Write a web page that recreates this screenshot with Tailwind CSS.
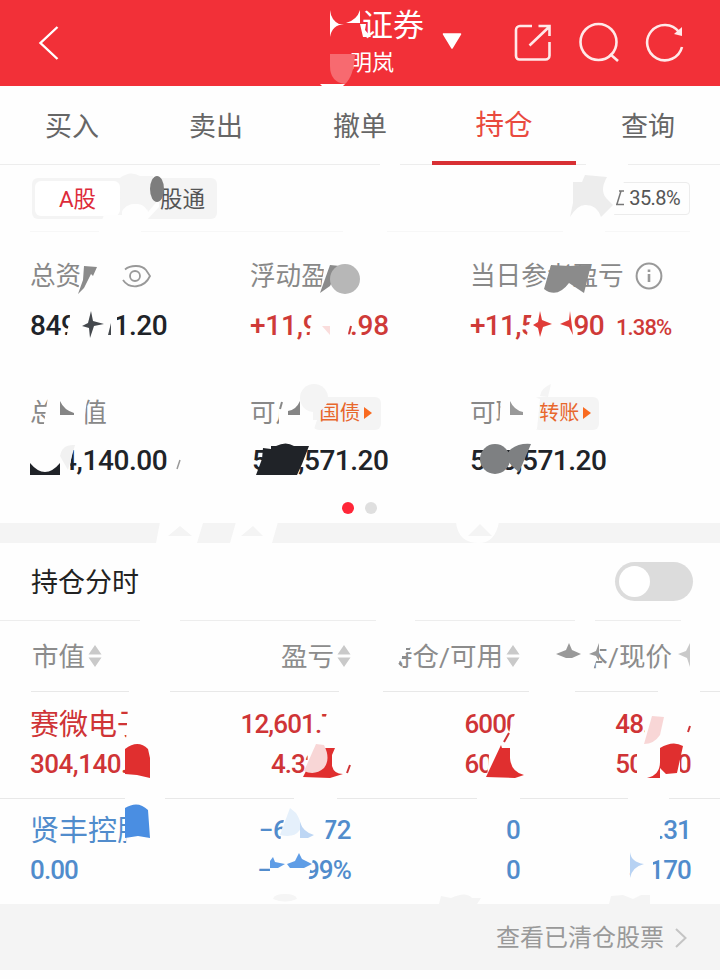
<!DOCTYPE html>
<html lang="zh-CN">
<head>
  <meta charset="UTF-8" />
  <title>持仓</title>
  <script src="https://cdn.jsdelivr.net/npm/@tailwindcss/browser@4"></script>
</head>
<body class="bg-white">
  <div class="relative w-[720px] h-[979px] overflow-hidden bg-[#fefefe] font-['Roboto','Noto_Sans_CJK_SC',sans-serif]">

    <!-- Header -->
    <header class="h-[86px] bg-[#f23038] text-white flex items-center pl-[38px] pr-[35px]">
      <svg class="w-[22px] h-[36px]" viewBox="0 0 22 36" fill="none" stroke="#fff" stroke-width="2.4"><path d="M19.5 2 2.5 18l17 16" /></svg>
      <div class="ml-[290px] w-[76px] h-[86px] pt-[7px]">
        <div class="text-[31px] leading-[38px] pl-[12px] whitespace-nowrap">证券</div>
        <div class="text-[22px] leading-[36px] whitespace-nowrap">明岚</div>
      </div>
      <svg class="ml-[16px] mb-[3px] w-[20px] h-[17px]" viewBox="0 0 20 17"><path d="M1.500 1h17L10 15z" fill="#fff" stroke="#fff" stroke-width="1.500" stroke-linejoin="round" /></svg>
      <div class="ml-auto flex items-center gap-[25px]">
        <svg class="w-[40px] h-[40px]" viewBox="0 0 40 40" fill="none" stroke="#ffe9e9" stroke-width="2.600">
          <path d="M19 3H7a4 4 0 0 0-4 4v26a3.500 3.500 0 0 0 3.500 3.500h26a4 4 0 0 0 4-4V19M16.500 22.500 36 4M25.500 3h11v10" />
        </svg>
        <svg class="w-[42px] h-[42px]" viewBox="0 0 42 42" fill="none" stroke="#ffe9e9" stroke-width="2.600">
          <circle cx="20.500" cy="20" r="18" /><path d="m32 32 8 7" />
        </svg>
        <svg class="w-[40px] h-[40px]" viewBox="0 0 40 40" fill="none" stroke="#ffe9e9" stroke-width="2.600">
          <path d="M37 24A17.700 17.700 0 1 1 34 9" /><path d="M37 4v9l-8-2z" fill="#ffe9e9" stroke="none" />
        </svg>
      </div>
    </header>

    <!-- Tabs -->
    <nav class="h-[79px] grid grid-cols-5 border-b border-[#ededed] text-[27px] leading-[83px] text-center text-[#666]">
      <a>买入</a>
      <a>卖出</a>
      <a>撤单</a>
      <a class="h-[79px] text-[28.500px] leading-[80px] text-[#e94a3e] border-b-4 border-[#d83034]">持仓</a>
      <a>查询</a>
    </nav>

    <!-- Market switch -->
    <div class="h-[67px] mx-[30px] pl-[2px] flex items-center justify-between border-b border-[#f7f7f7]">
      <div class="w-[185px] h-[41px] p-[3px] rounded-md bg-[#f4f4f4] flex text-[22.500px] leading-[36px]">
        <div class="w-[85px] h-[35px] rounded-md bg-white text-center text-[#dd2b3a]">A股</div>
        <div class="flex-1 text-right pr-[9px] text-[#555]">股通</div>
      </div>
      <div class="w-[118px] h-[33px] pr-[9px] border border-[#ececec] rounded-sm text-right text-[20px] leading-[30px] tracking-[-0.6px] text-[#555]">35.8%</div>
    </div>

    <!-- Account summary -->
    <section class="h-[291px] pt-[26px] pl-[30px]">
      <div class="grid grid-cols-[220px_220px_250px]">
        <div>
          <div class="h-[36px] flex items-center text-[25.600px] text-[#888]">总资产
            <svg class="ml-[15px] mt-[2px] w-[30px] h-[24px]" viewBox="0 0 30 24" fill="none" stroke="#999" stroke-width="1.800"><path d="M3 4.500C9-.5 20 0 24 5l4 6c-6 13-21 13-27 4" /><circle cx="13" cy="11" r="5" /></svg>
          </div>
          <div class="mt-[12px] text-[28px] leading-[40px] tracking-[-0.400px] font-medium text-[#202328]">849,711.20</div>
        </div>
        <div>
          <div class="h-[36px] text-[25.600px] leading-[37px] text-[#888]">浮动盈亏</div>
          <div class="mt-[12px] text-[28px] leading-[40px] tracking-[-0.200px] font-medium text-[#cf3a38]">+11,922.98</div>
        </div>
        <div>
          <div class="h-[36px] flex items-center text-[25.600px] text-[#888]">当日参考盈亏
            <svg class="ml-[11px] w-[28px] h-[28px]" viewBox="0 0 28 28" fill="none" stroke="#999" stroke-width="2"><circle cx="14" cy="14" r="12.400" /><path d="M14 12v8M14 7.500v2.500" stroke-width="2.600" /></svg>
          </div>
          <div class="mt-[12px] flex items-baseline text-[28px] leading-[40px] tracking-[-0.700px] font-medium text-[#cf3a38]">+11,571.90<span class="ml-[12px] text-[22px] tracking-[-0.900px]">1.38%</span></div>
        </div>
      </div>
      <div class="mt-[47px] grid grid-cols-[220px_220px_250px]">
        <div>
          <div class="h-[36px] text-[25.600px] leading-[37px] text-[#888]">总市值</div>
          <div class="mt-[10px] text-[28px] leading-[40px] tracking-[-0.400px] font-medium text-[#202328]">304,140.00</div>
        </div>
        <div>
          <div class="h-[36px] flex items-center text-[25.600px] text-[#888]">可用
            <span class="ml-[12px] h-[33px] w-[68px] rounded-md bg-[#f4f4f4] flex items-center pl-[6px] text-[20.500px] text-[#e8672c]">国债<svg class="ml-[4px] w-[8px] h-[12px]" viewBox="0 0 8 12"><path d="M0 0v12l8-6z" fill="#f96a20" /></svg></span>
          </div>
          <div class="mt-[10px] text-[28px] leading-[40px] tracking-[-0.500px] font-medium text-[#202328]"><span class="ml-[2px]">545,571.20</span></div>
        </div>
        <div>
          <div class="h-[36px] flex items-center text-[25.600px] text-[#888]">可取
            <span class="ml-[12px] h-[33px] w-[66px] rounded-md bg-[#f4f4f4] flex items-center pl-[6px] text-[20px] text-[#e8672c]">转账<svg class="ml-[4px] w-[8px] h-[12px]" viewBox="0 0 8 12"><path d="M0 0v12l8-6z" fill="#f96a20" /></svg></span>
          </div>
          <div class="mt-[10px] text-[28px] leading-[40px] tracking-[-0.500px] font-medium text-[#202328]">545,571.20</div>
        </div>
      </div>
      <div class="mt-[21px] pr-[31px] flex justify-center gap-[11px]">
        <i class="w-[12px] h-[12px] rounded-full bg-[#ff2638]"></i>
        <i class="w-[12px] h-[12px] rounded-full bg-[#dfdfdf]"></i>
      </div>
    </section>

    <div class="h-[20px] bg-[#f4f4f4]"></div>

    <div class="h-[78px] pl-[31px] pr-[27px] flex items-center justify-between border-b border-[#ededed] text-[27px] text-[#222]">
      <span class="pt-[4px]">持仓分时</span>
      <span class="w-[78px] h-[39px] rounded-full bg-[#dcdcdc] p-[4px]"><i class="block w-[31px] h-[31px] rounded-full bg-white"></i></span>
    </div>

    <!-- Positions -->
    <div class="h-[71px] pl-[30px] grid grid-cols-[151px_170px_169px_171px] border-b border-[#e8e8e8] text-[26.500px] leading-[73px] text-[#8c8c8c]">
      <div class="h-[70px] flex items-center pl-[2px] gap-[3px]">市值<svg class="w-[14px] h-[22px]" viewBox="0 0 14 22" fill="#c9c9c9"><path d="M7 0l6.500 9.500H.5zM7 22l6.500-9.500H.5z" /></svg></div>
      <div class="h-[70px] flex items-center justify-end gap-[3px]">盈亏<svg class="w-[14px] h-[22px]" viewBox="0 0 14 22" fill="#c9c9c9"><path d="M7 0l6.500 9.500H.5zM7 22l6.500-9.500H.5z" /></svg></div>
      <div class="h-[70px] flex items-center justify-end gap-[3px] whitespace-nowrap">持仓/可用<svg class="w-[14px] h-[22px]" viewBox="0 0 14 22" fill="#c9c9c9"><path d="M7 0l6.500 9.500H.5zM7 22l6.500-9.500H.5z" /></svg></div>
      <div class="h-[70px] flex items-center justify-end gap-[5px] whitespace-nowrap">成本/现价<svg class="w-[14px] h-[22px]" viewBox="0 0 14 22" fill="#c9c9c9"><path d="M7 0l6.500 9.500H.5zM7 22l6.500-9.500H.5z" /></svg></div>
    </div>
    <div class="h-[107px] pt-[12px] pl-[30px] grid grid-cols-[151px_170px_169px_171px] grid-rows-[40px_40px] border-b border-[#e8e8e8] text-[26px] leading-[40px] tracking-[-0.900px] font-medium text-right text-[#cf3436]">
      <div class="text-left text-[29px] leading-[42px] font-normal tracking-normal">赛微电子</div>
      <div><span class="mr-[2px]">12,601.71</span></div>
      <div>6000</div>
      <div>48.590</div>
      <div class="text-left tracking-[-0.500px]">304,140.00</div>
      <div>4.325%</div>
      <div>6000</div>
      <div>50.690</div>
    </div>
    <div class="h-[105px] pt-[11px] pl-[30px] grid grid-cols-[151px_170px_169px_171px] grid-rows-[40px_40px] text-[26px] leading-[40px] tracking-[-0.900px] font-medium text-right text-[#518ccc]">
      <div class="text-left text-[29px] leading-[42px] font-normal tracking-normal">贤丰控股</div>
      <div class="tracking-[-0.500px]">−648.72</div>
      <div>0</div>
      <div>4.31</div>
      <div class="text-left">0.00</div>
      <div>−15.99%</div>
      <div>0</div>
      <div>4.170</div>
    </div>

    <footer class="h-[66px] bg-[#f4f4f4] flex items-center justify-end pr-[33px] text-[24px] text-[#999]">
      <span class="pt-[1px]">查看已清仓股票</span>
      <svg class="ml-[11px] mt-[2px] w-[12px] h-[20px]" viewBox="0 0 12 20" fill="none" stroke="#c4c4c4" stroke-width="2"><path d="m1 1 9.500 9L1 19" /></svg>
    </footer>

    <!-- Masks laid over the private parts of the page -->
    <svg class="absolute inset-0 pointer-events-none" width="720" height="979" viewBox="0 0 720 979">
      <!-- header -->
      <path d="M330 10q1 10 9 14h-9zM360 10v13h-14q11-3 14-13zM330 24h14q-12 1-14 13z" fill="#fff" />
      <path d="M360 24h6l-1 6 6 7h-8z" fill="#fff" />
      <path d="M330 54h25q-1 22-10 30-15-2-15-18z" fill="#f76a70" />
      <path d="M320 84h25l-4 4h-17z" fill="#fff" />
      <!-- market switch -->
      <g fill="#fefefe">
        <path d="M104 215h18V204l8-4q16 0 18 12l11-13v8l-12 13h-45z" />
        <path d="M380 164h20v2h-20zM586 164h42v2h-42zM99 230h42v3H99zM343 230h44v3h-44zM563 230h42v3h-42z" />
        <path d="M570 178h55l-11 37h-44z" />
      </g>
      <path d="M120 178q10-8 20-2h13v24l-6 10q-4-7-12-6-10 0-14 9z" fill="#f4f4f4" />
      <circle cx="135" cy="217" r="13" fill="#fefefe" />
      <ellipse cx="157" cy="189" rx="7" ry="13" fill="#7d7d7d" />
      <path d="M573 182h9l3-7 22 2q-8 14 0 22l6 6-12 12q-4-12-15-12-8-1-16 12l3-14z" fill="#ededed" />
      <path d="m621 191-4 13M616 204.500h8M619 191h5" stroke="#777" stroke-width="1.500" />
      <!-- total assets -->
      <path d="M82 262h26v32H78zM71 309h46v32H66z" fill="#fefefe" />
      <path d="m84 266 13 1-4 9-2-2-7 14-6 6 5-14z" fill="#8b8b8b" />
      <path d="m91 311 2 10 11 3-10 2-4 12-1-10-7-2 6-3zM111 323v12h-3z" fill="#44484d" />
      <!-- floating profit -->
      <path d="M325 262h36v32h-41zM312 309h39l-3 32h-39z" fill="#fefefe" />
      <path d="m330 265 10 1-10 20-10 7z" fill="#8b8b8b" />
      <circle cx="345" cy="279" r="15" fill="#b7b7b7" />
      <path d="m351 326-2 8" stroke="#cf3a38" stroke-width="2" fill="none" />
      <path d="M322 326h8v9z" fill="#fadddc" />
      <!-- daily profit -->
      <path d="m551 265 18 1 22-1-7 28-15-10q-12 16-25 6z" fill="#8b8b8b" />
      <path d="M533 309h40v32h-47l2-12z" fill="#fefefe" />
      <path d="m540 311 2 9 10 4-9 3-3 10-2-9-5-3 5-3zM570 311l3 24-4-8-9-3 9-4z" fill="#e03c38" />
      <!-- market value -->
      <g fill="#fefefe">
        <path d="M48 396h35l4 4-4 30H43zM28 442h46l-5 30-9 5H28z" />
        <path d="M279 396h32v34h-32zM501 396h31l8 3-3 30h-38z" />
      </g>
      <path d="M60 401q4 9 14 12v2H60zM300 401q-4 9-12 10v4h12z" fill="#858585" />
      <path d="M30 463q15 18 30 0v12H30z" fill="#202328" />
      <path d="M60 456q2-12 15-11l-7 25z" fill="#f1f1f1" />
      <path d="m180 460-3 9" stroke="#999" stroke-width="1.500" />
      <!-- available -->
      <path d="m282 402-2 7" stroke="#888" stroke-width="2" />
      <circle cx="314" cy="398" r="14" fill="#f4f4f4" />
      <path d="M311 429v-9h6l-3 9z" fill="#fefefe" />
      <path d="m263 448 8 1v-3h5q10-5 18 0h15l-7 18-5 11h-41l6-16z" fill="#202328" />
      <!-- withdrawable -->
      <path d="M510 401q4 9 13 11v3h-13z" fill="#999" />
      <path d="M540 396q1-8 11-12l-3 13z" fill="#f4f4f4" />
      <circle cx="495" cy="459" r="15" fill="#7e8082" />
      <path d="m531 444-8 19-4 9q-19-14-8-23 8-6 20-5zM508 456h6v6h-6z" fill="#7e8082" />
      <!-- band -->
      <g fill="#fefefe">
        <path d="m160 522 43 1-6 20h-41zM236 522h42l-6 21h-42zM456 522h43q-4 21-20 21-21 0-23-21z" />
        <path d="M140 619h40v3h-40zM376 619h39v3h-39zM575 619h20v3h-20zM681 619h39v3h-39zM129 690h41v3h-41zM339 690h44v3h-44zM529 690h46v3h-46zM658 690h42v3h-42zM0 690h31v2H0zM125 797h40v3h-40zM294 797h43v3h-43zM477 797h43v3h-43zM628 797h41v3h-41z" />
      </g>
      <path d="m180 526 12 10h-24zM253 526l10 10h-22zM480 524l12 12h-24z" fill="#f4f4f4" />
      <!-- column heads -->
      <path d="M385 640h22l3 8-11 14v8h-14zM555 640h42l3 10-7 20h-38zM676 640h18v31h-18z" fill="#fefefe" />
      <path d="M406 649h4M402 657h6M399 663l3 3" stroke="#8c8c8c" stroke-width="2" />
      <path d="m569 643 3 7 9 4-9 4h-6l-10-4 10-4zM599 643v18l-3-5-7-2 7-3z" fill="#999" />
      <path d="M690 643v24l-3-9-9-4 8-3z" fill="#c9c9c9" />
      <!-- first position -->
      <g fill="#fefefe">
        <path d="M128 706h26v35h-28zM328 708h27v30h-34zM517 708h8v32h-18l4-15z" />
        <path d="M647 706h47v34h-50zM125 744h50v36h-50zM308 744h45v34h-46zM490 744h35v34h-38zM637 744h43v34h-43z" />
      </g>
      <path d="M125 749q13-10 23 0l2 9v20l-13-3-12-1z" fill="#e02f2f" />
      <path d="M325 748h10l-3 7v11q2 8 11 8l-13 4-27-1 9-18z" fill="#e02f2f" />
      <path d="m316 744 8 1q7 14 0 23-9 8-20 3z" fill="#f8d6d6" />
      <path d="m350 765-3 8M690 726l-2 6" stroke="#cf3436" stroke-width="2" />
      <path d="m501 745 1 3h8v10q1 14 14 17l-9 3-29-1z" fill="#e02f2f" />
      <path d="m509 733-5 9" stroke="#cf3436" stroke-width="2" />
      <path d="m652 716 12 1-4 18q-6 9-16 9z" fill="#f8d6d6" />
      <path d="M660 748q13-8 23-2l-6 27-11 1-6-6v10h-13q13-3 13-16z" fill="#e02f2f" />
      <!-- second position -->
      <g fill="#fefefe">
        <path d="M127 807h28v42h-29zM286 808h42l-6 34h-42zM270 851h45l-7 28h-38z" />
        <path d="M635 812h25v31h-25zM630 852h23v30h-23z" />
      </g>
      <path d="M125 808q13-8 23 2l2 28-12-2-13 2z" fill="#4a8ee2" />
      <path d="m290 808 6 5q8 13 3 18-5 7-19 4z" fill="#e5f0fb" />
      <path d="M300 822q3 10 14 13l-6 3h-8z" fill="#bdd6f4" />
      <path d="m273 857 2 5 10 2-7 4h-8v-7zM299 853l3 6 10 5-8 4h-14l-3-4 8-3z" fill="#5f9de6" />
      <path d="M630 852q1 10 14 12-12 3-14 14z" fill="#b7d2f3" />
      <!-- footer edge -->
      <path d="M273 899q1-5 12-5t12 5q-12 5-24 0z" fill="#f5f5f5" />
      <path d="m439 904 2-8 10 2q15-7 21 0h9l-4 6zM609 904l2-8 12-1 10 4 8-4h9v9z" fill="#f4f4f4" />
    </svg>
  </div>
</body>
</html>
